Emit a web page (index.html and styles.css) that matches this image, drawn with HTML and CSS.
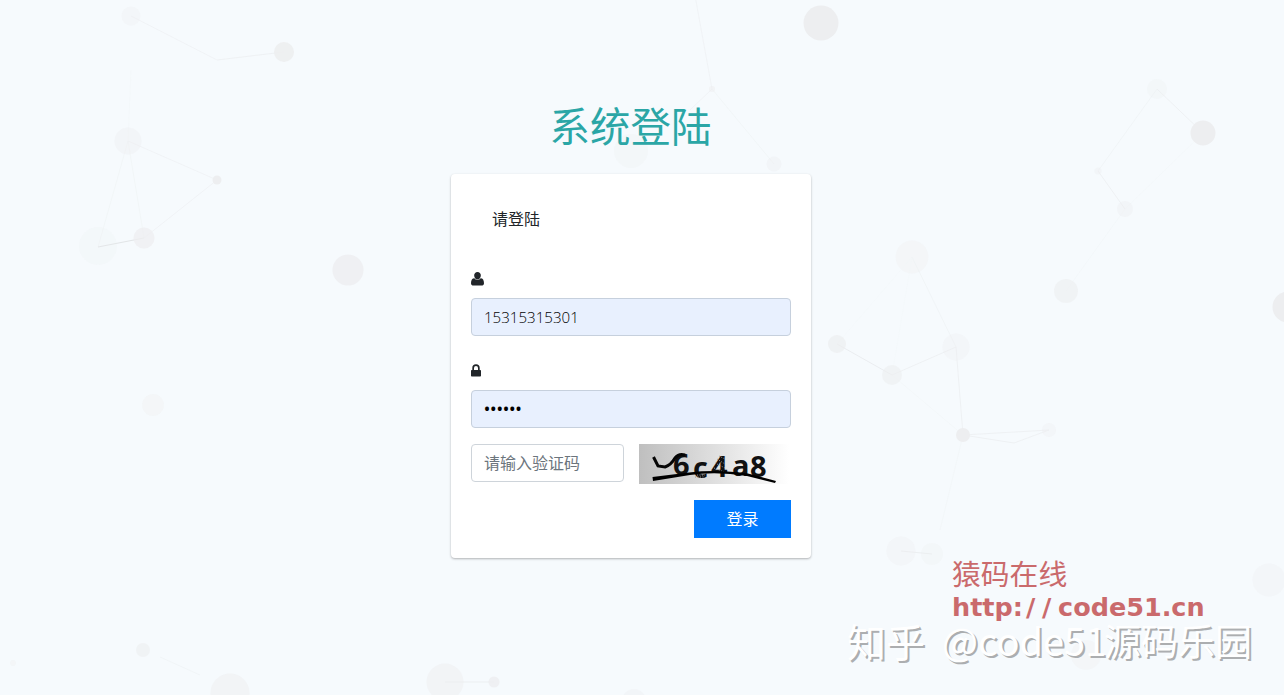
FILE: index.html
```html
<!DOCTYPE html>
<html lang="zh-CN">
<head>
<meta charset="utf-8">
<title>系统登陆</title>
<link rel="stylesheet" href="styles.css">
</head>
<body>
<svg class="particles" viewBox="0 0 1284 695" aria-hidden="true">
  <g class="links">
    <path d="M131 16L217 60" opacity=".6"/><path d="M217 60L284 52" opacity=".8"/>
    <path d="M128 141L217 180L144 238" opacity=".6"/><path d="M128 141L144 238M128 141L98 247" opacity=".4"/>
    <path class="strong" d="M98 247L144 238"/>
    <path d="M131 70L128 141" opacity=".2"/>
    <path d="M160 657L200 675" opacity=".5"/><path d="M445 682H494"/>
    <path d="M694 -10L712 89L690 110" opacity=".6"/><path d="M712 89L774 164" opacity=".4"/>
    <path d="M1157 89L1203 133M1098 171L1125 209" opacity=".8"/><path d="M1157 89L1098 171" opacity=".5"/><path d="M1203 133L1125 209L1066 291" opacity=".2"/>
    <path d="M912 257L956 347" opacity=".5"/><path d="M912 257L837 344M912 257L892 375" opacity=".15"/>
    <path class="strong" d="M837 344L892 375" opacity=".6"/><path d="M892 375L956 347L963 435M963 435L1049 430M963 435L1014 443L1049 430" opacity=".8"/>
    <path d="M892 375L963 435L940 530" opacity=".25"/><path d="M901 551L932 554"/>
  </g>
  <g class="dots">
    <circle cx="131" cy="16" r="9.500" opacity=".35"/><circle cx="284" cy="52" r="10" opacity=".9"/>
    <circle cx="128" cy="141" r="13.500" opacity=".4"/><circle cx="217" cy="180" r="4.500"/>
    <circle cx="144" cy="238" r="10.500" opacity=".75"/><circle cx="98" cy="246" r="19" opacity=".2"/>
    <circle cx="348" cy="270" r="15.500" opacity=".8"/><circle cx="153" cy="405" r="11" opacity=".3"/>
    <circle cx="13" cy="663" r="3" opacity=".3"/><circle cx="143" cy="650" r="7" opacity=".6"/>
    <circle cx="230" cy="693" r="19.500" opacity=".5"/><circle cx="445" cy="682" r="18.500" opacity=".5"/>
    <circle cx="494" cy="682" r="5.500" opacity=".8"/><circle cx="634" cy="701" r="12" opacity=".4"/>
    <circle cx="631" cy="151" r="17" opacity=".25"/><circle cx="712" cy="89" r="3" opacity=".5"/>
    <circle cx="774" cy="164" r="7.500" opacity=".4"/><circle cx="821" cy="23" r="17.500"/>
    <circle cx="1157" cy="89" r="10" opacity=".25"/><circle cx="1203" cy="133" r="12.500"/>
    <circle cx="1098" cy="171" r="3.500" opacity=".4"/><circle cx="1125" cy="209" r="8" opacity=".4"/>
    <circle cx="1066" cy="291" r="12" opacity=".6"/><circle cx="1288" cy="307" r="15.500"/>
    <circle cx="912" cy="257" r="16.500" opacity=".3"/><circle cx="837" cy="344" r="9" opacity=".7"/>
    <circle cx="892" cy="375" r="10" opacity=".6"/><circle cx="956" cy="347" r="13.500" opacity=".35"/>
    <circle cx="963" cy="435" r="7"/><circle cx="1049" cy="430" r="7" opacity=".35"/>
    <circle cx="901" cy="551" r="14.500" opacity=".35"/><circle cx="932" cy="554" r="11" opacity=".25"/>
    <circle cx="1269" cy="580" r="16.500" opacity=".35"/><circle cx="1086" cy="655" r="15" opacity=".3"/>
  </g>
</svg>

<main class="page">
  <h1 class="title">系统登陆</h1>
  <form class="card">
    <p class="hint">请登陆</p>
    <label class="icon-label" for="user">
      <svg class="icon-user" viewBox="0 0 13 14"><path d="M6.500 0a3.500 3.500 0 0 1 3.300 4.100C9.600 6 8.200 7.500 6.500 7.500S3.400 6 3.200 4.100A3.500 3.500 0 0 1 6.500 0ZM3.400 6.300C4.200 7.400 5.200 8 6.500 8s2.300-.6 3.100-1.700C11.800 6.300 13 8.300 13 11.200c0 1.600-1 2.300-2.500 2.300h-8C1 13.500 0 12.800 0 11.200c0-2.900 1.200-4.900 3.400-4.900Z"/></svg>
    </label>
    <input class="field filled" id="user" type="text" value="15315315301">
    <label class="icon-label second" for="password">
      <svg class="icon-lock" viewBox="0 0 10 13"><path fill-rule="evenodd" d="M1.300 6V4a3.700 3.700 0 0 1 7.400 0v2h.5q.8 0 .8.800v4.900q0 .8-.8.800H.8q-.8 0-.8-.8V6.800Q0 6 .8 6ZM3 6h4V4a2 2 0 0 0-4 0Z"/></svg>
    </label>
    <input class="field filled password" id="password" type="password" value="123456">
    <div class="captcha-row">
      <input class="field code" type="text" placeholder="请输入验证码">
      <svg class="captcha" viewBox="0 0 150 40">
        <defs>
          <linearGradient id="shade" x1="0" y1="0" x2="1" y2="0"><stop offset="0" stop-color="#bfbfbf"/><stop offset="1" stop-color="#fff"/></linearGradient>
        </defs>
        <rect width="150" height="40" fill="url(#shade)"/>
        <g class="captcha-text">
          <text x="34" y="31">6</text>
          <text x="54" y="34">c</text>
          <text x="72" y="33">4</text>
          <text x="93" y="32">a</text>
          <text x="111" y="33">8</text>
        </g>
        <path class="scratch" d="M78 15l8 5M76 19l10 5M75 24l10 4M80 12l6 3M56 33h9M58 31h8"/>
        <path class="stroke" d="M14.500 13L19 22L26 23Q32 21 36 14Q40 9 46 11"/>
        <path d="M13.500 33L50 28.500Q72 26 95 28L109 29.500L137 37L136 39L108 32Q77 27 51 31L14 37Z"/>
      </svg>
    </div>
    <div class="actions"><button class="submit" type="button">登录</button></div>
  </form>
</main>

<div class="watermark">
  <span class="site-name">猿码在线</span>
  <span class="site-url">http:<span class="slashes">//</span>code51.cn</span>
  <span class="credit"><span class="brand">知乎</span><span class="account">@code51</span><span>源码乐园</span></span>
</div>
</body>
</html>
```
FILE: styles.css
```css
* { box-sizing: border-box; }

body {
  margin: 0;
  height: 695px;
  overflow: hidden;
  position: relative;
  background: #f6fafd;
  color: #212529;
  font: 16px/24px "Open Sans", "Noto Sans CJK SC", sans-serif;
}

.particles { position: absolute; inset: 0; width: 1284px; height: 695px; }
.links { fill: none; stroke: #eceff1; stroke-width: 1; }
.links .strong { stroke: #e2e5e7; }
.dots { fill: #edeef0; }

.page {
  position: relative;
  display: flex;
  flex-direction: column;
  align-items: center;
  width: 1262px;
  padding-top: 95px;
}

.title {
  margin: 0 0 19px -1px;
  font: 400 40.5px/60px "Noto Sans CJK SC", sans-serif;
  color: #2ba6a6;
}

.card {
  width: 360px;
  height: 384px;
  padding: 20px;
  background: #fff;
  border-radius: 4px;
  box-shadow: 0 1px 3px rgba(0, 0, 0, .12), 0 1px 2px rgba(0, 0, 0, .18);
}

.hint {
  margin: 0;
  padding: 12px 21px 0;
  height: 72px;
  font: 400 16px/24px "Noto Sans CJK SC", sans-serif;
}

.icon-label { display: flex; align-items: flex-start; height: 32px; padding-top: 6px; }
.icon-label.second { margin-top: 22px; }
.icon-label svg { display: block; fill: #212529; }
.icon-user { width: 13px; height: 14px; }
.icon-lock { width: 10px; height: 13px; }

.field {
  display: block;
  width: 100%;
  height: 38px;
  margin: 0;
  padding: 6px 12px;
  border: 1px solid #ced4da;
  border-radius: 4px;
  background: #fff;
  color: #000;
  font: 350 15.1px/24px "Open Sans", sans-serif;
  outline: none;
}

.field.filled { background: #e8f0fe; border-color: #c6d0dd; }
.field.password { font-weight: 600; font-size: 16px; letter-spacing: .3px; }
.field.code { width: 153px; padding: 5px 12px 7px; font: 400 16px/24px "Noto Sans CJK SC", sans-serif; }
.field.code::placeholder { color: #6c757d; opacity: 1; }

.captcha-row { display: flex; gap: 15px; margin-top: 16px; height: 40px; }
.captcha { width: 150px; height: 40px; }
.captcha-text { font: bold 29px "Open Sans", sans-serif; fill: #111; }
.stroke { fill: none; stroke: #050505; stroke-width: 3; }
.scratch { fill: none; stroke: #999; stroke-width: 1; stroke-dasharray: 1 1.5; }

.actions { display: flex; justify-content: flex-end; margin-top: 16px; }

.submit {
  width: 97px;
  height: 38px;
  padding: 0 0 1px;
  border: 0;
  background: #007bff;
  color: #fff;
  font: 400 16px/37px "Noto Sans CJK SC", sans-serif;
}

.watermark {
  position: absolute;
  left: 847px;
  top: 556px;
  display: flex;
  flex-direction: column;
  white-space: nowrap;
}

.site-name, .site-url { margin-left: 105px; color: #ca6a6c; }
.site-name { font: 400 28.8px/34px "Noto Sans CJK SC", serif; }
.site-url { font: bold 25.5px/34px "DejaVu Sans", sans-serif; }
.slashes { padding-left: 3px; letter-spacing: 6.7px; }

.credit {
  display: flex;
  margin-top: -8px;
  font: 400 37px/48px "Noto Sans CJK SC", sans-serif;
  color: #fff;
  text-shadow: 2px 1.5px 0 #acaeb0;
}

.brand { width: 95px; font-size: 39px; }
.account { width: 162px; font-size: 38px; }
```
